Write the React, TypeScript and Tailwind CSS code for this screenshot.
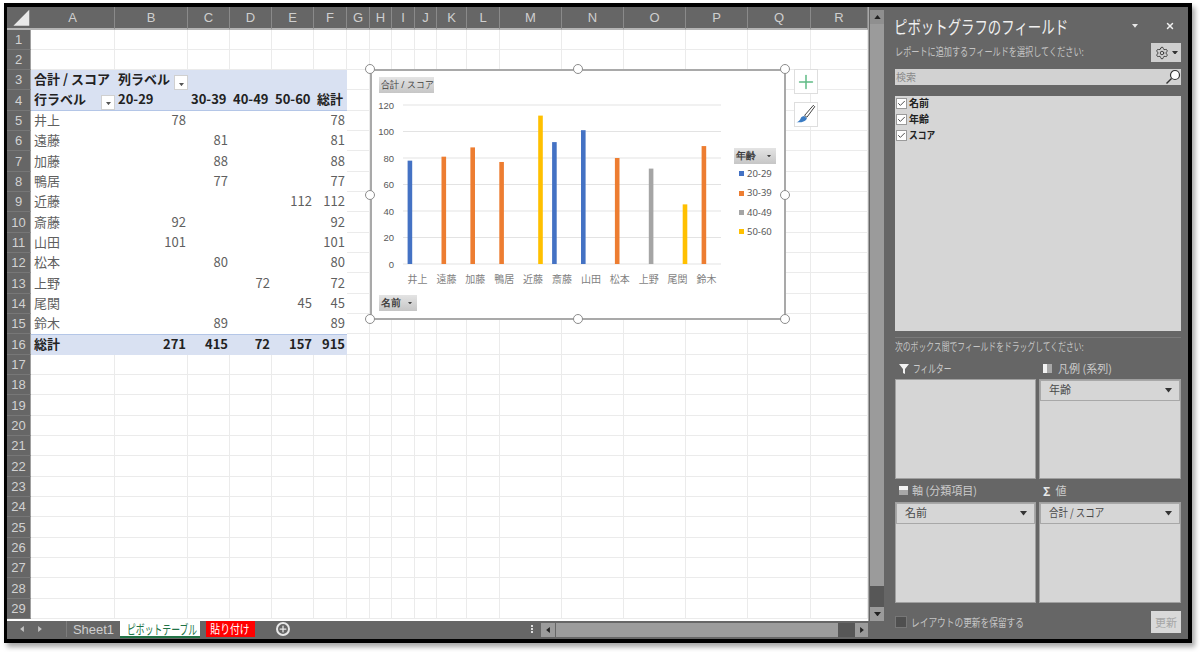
import React from 'react';
import { Settings, X, Plus, Check } from 'lucide-react';

const COLS = ['A', 'B', 'C', 'D', 'E', 'F', 'G', 'H', 'I', 'J', 'K', 'L', 'M', 'N', 'O', 'P', 'Q', 'R'];
const ROWS = Array.from({ length: 29 }, (_, i) => i + 1);

// name, column index of the age group, score
const PEOPLE: [string, number, number][] = [
  ['井上', 1, 78],
  ['遠藤', 2, 81],
  ['加藤', 2, 88],
  ['鴨居', 2, 77],
  ['近藤', 4, 112],
  ['斎藤', 1, 92],
  ['山田', 1, 101],
  ['松本', 2, 80],
  ['上野', 3, 72],
  ['尾関', 4, 45],
  ['鈴木', 2, 89],
];
const TOTALS = ['総計', '271', '415', '72', '157', '915'];
const HEAD = ['', '20-29', '30-39', '40-49', '50-60', '総計'];
const SERIES = [
  { label: '20-29', color: '#4472C4' },
  { label: '30-39', color: '#ED7D31' },
  { label: '40-49', color: '#A5A5A5' },
  { label: '50-60', color: '#FFC000' },
];

function Tri({ className = '', color = '#444', up = false }: { className?: string; color?: string; up?: boolean }) {
  return (
    <svg viewBox="0 0 8 5" className={className}>
      <polygon points={up ? '0,5 8,5 4,0' : '0,0 8,0 4,5'} fill={color} />
    </svg>
  );
}

function FilterBtn() {
  return (
    <span className="flex h-[15px] w-[14px] shrink-0 items-center justify-center self-end border border-[#d0d0d0] bg-white">
      <Tri className="mt-[3px] w-[5px]" color="#555" />
    </span>
  );
}

function Cell({ r, c }: { r: number; c: number }) {
  const inPivot = r >= 3 && r <= 16 && c <= 5;
  if (!inPivot) return <div className="border-r border-b border-[#ebebeb] bg-white" />;

  if (r === 3 || r === 4) {
    let content: React.ReactNode = null;
    if (r === 3 && c === 0) content = <span className="mb-[3px]">合計 / スコア</span>;
    if (r === 3 && c === 1)
      content = (
        <>
          <span className="mb-[3px]">列ラベル</span>
          <FilterBtn />
        </>
      );
    if (r === 4 && c === 0)
      content = (
        <>
          <span className="mb-[3px]">行ラベル</span>
          <FilterBtn />
        </>
      );
    if (r === 4 && c > 0) content = <span className="mb-[3px]">{HEAD[c]}</span>;
    return (
      <div className={`flex items-center justify-between overflow-visible whitespace-nowrap bg-[#d9e1f2] pl-[3px] text-[13px] leading-none font-bold text-[#222] ${r === 4 ? 'border-b border-[#b4c6e7]' : ''}`}>
        {content}
      </div>
    );
  }

  if (r === 16) {
    return (
      <div className={`flex items-center whitespace-nowrap border-t border-[#b4c6e7] bg-[#d9e1f2] pr-[2px] pb-[3px] pl-[3px] text-[13px] leading-none font-bold text-[#222] ${c === 0 ? 'justify-start' : 'justify-end'}`}>
        {TOTALS[c]}
      </div>
    );
  }

  const [name, col, score] = PEOPLE[r - 5];
  if (c === 0) return <div className="flex items-center bg-white pb-[3px] pl-[3px] text-[13px] leading-none text-[#5f5f5f]">{name}</div>;
  const show = c === col || c === 5;
  return <div className="flex items-center justify-end bg-white pr-[2px] pb-[3px] text-[13px] leading-none text-[#5f5f5f]">{show ? score : ''}</div>;
}

function Handle({ className }: { className: string }) {
  return <span className={`absolute h-[10px] w-[10px] rounded-full border-[1.5px] border-[#8c8c8c] bg-white ${className}`} />;
}

function ChartBtn({ className, children }: { className: string; children: React.ReactNode }) {
  return (
    <div className={`absolute flex h-[16px] items-center justify-between bg-linear-to-b from-[#e4e4e4] to-[#c6c6c6] px-[2px] text-[9.5px] leading-none whitespace-nowrap text-[#404040] ${className}`}>
      {children}
    </div>
  );
}

function PivotChart() {
  const x0 = 31;
  const catW = 28.9;
  const y0 = 193;
  const unit = 159 / 120;
  return (
    <div className="absolute top-[62px] left-[363px] h-[251px] w-[416px] border-2 border-[#a9a9a9] bg-white">
      <svg viewBox="0 0 412 247" className="absolute inset-0 h-[247px] w-[412px]">
        {[0, 20, 40, 60, 80, 100, 120].map((v) => (
          <g key={v}>
            <line x1={x0} x2={349} y1={y0 - v * unit} y2={y0 - v * unit} stroke="#e3e3e3" strokeWidth="1" />
            <text x={22} y={y0 - v * unit + 3.5} textAnchor="end" fontSize="9.5" fill="#595959" fontFamily="'Liberation Sans', sans-serif">
              {v}
            </text>
          </g>
        ))}
        {PEOPLE.map(([name, col, score], i) => (
          <g key={name}>
            <rect x={x0 + i * catW + 4.6 + (col - 1) * 5} y={y0 - score * unit} width={4.6} height={score * unit} fill={SERIES[col - 1].color} />
            <text x={x0 + i * catW + 14.5} y={211.5} textAnchor="middle" fontSize="10" fill="#7f7f7f" fontFamily="'Noto Sans CJK JP', sans-serif">
              {name}
            </text>
          </g>
        ))}
      </svg>

      <ChartBtn className="top-[6px] left-[7px] w-[55px]">
        <span className="inline-block origin-left scale-x-[0.9]">合計 / スコア</span>
      </ChartBtn>
      <ChartBtn className="top-[224px] left-[7px] w-[38px] font-bold">
        <span>名前</span>
        <Tri className="mr-[3px] w-[4px]" />
      </ChartBtn>
      <ChartBtn className="top-[77px] left-[362px] w-[42px] font-bold">
        <span>年齢</span>
        <Tri className="mr-[3px] w-[4px]" />
      </ChartBtn>

      <div className="absolute top-[93px] left-[367px] flex flex-col">
        {SERIES.map((s) => (
          <div key={s.label} className="flex h-[19.4px] items-center gap-[3px] text-[9.5px] leading-none text-[#595959]">
            <span className="h-[5px] w-[5px]" style={{ backgroundColor: s.color }} />
            <span>{s.label}</span>
          </div>
        ))}
      </div>

      <Handle className="top-[-7px] left-[-7px]" />
      <Handle className="top-[-7px] left-1/2 -translate-x-1/2" />
      <Handle className="top-[-7px] right-[-6px]" />
      <Handle className="top-1/2 left-[-7px] -translate-y-1/2" />
      <Handle className="top-1/2 right-[-6px] -translate-y-1/2" />
      <Handle className="bottom-[-6px] left-[-7px]" />
      <Handle className="bottom-[-6px] left-1/2 -translate-x-1/2" />
      <Handle className="right-[-6px] bottom-[-6px]" />
    </div>
  );
}

function SideButtons() {
  return (
    <>
      <div className="absolute top-[62px] left-[787px] flex h-[25px] w-[24px] items-center justify-center border border-[#dedede] bg-white">
        <Plus size={22} strokeWidth={1.5} color="#5fbb85" absoluteStrokeWidth />
      </div>
      <div className="absolute top-[95px] left-[787px] h-[25px] w-[24px] border border-[#dedede] bg-white">
        <svg viewBox="0 0 24 25" className="h-full w-full">
          <path d="M20 2.5 L21.5 4 L13 15.5 L10.5 13.5 Z" fill="#fff" stroke="#333" strokeWidth="1" />
          <path d="M10 14 L13 16.5 C12 19.5 8 21.5 1.5 21 C4 20 5.5 18.5 6 17 C6.5 15 8.5 14 10 14 Z" fill="#3b7cc4" />
        </svg>
      </div>
    </>
  );
}

function Sheet() {
  return (
    <div className="relative h-[614px] w-[861px] overflow-hidden bg-white">
      <div className="grid grid-cols-[24px_84px_73px_42px_42px_42px_33px_23px_22px_23px_22px_30px_33px_62px_62px_62px_62px_63px_57px] grid-rows-[22.5px_repeat(29,20.33px)] font-['Noto_Sans_CJK_JP','Liberation_Sans',sans-serif]">
        <div className="relative border-b-2 border-[#b5b5b5] bg-[#666]">
          <svg viewBox="0 0 24 22" className="absolute inset-0 h-full w-full">
            <polygon points="23,3 23,20 6,20" fill="#eaeaea" />
          </svg>
        </div>
        {COLS.map((c) => (
          <div key={c} className="flex items-center justify-center border-r border-b-2 border-r-[#8a8a8a] border-b-[#b5b5b5] bg-[#666] font-['Liberation_Sans',sans-serif] text-[13px] leading-none text-[#cfcfcf]">
            {c}
          </div>
        ))}
        {ROWS.map((r) => (
          <React.Fragment key={r}>
            <div className="flex items-center justify-center border-r border-b border-r-[#a0a0a0] border-b-[#777] bg-[#666] font-['Liberation_Sans',sans-serif] text-[13px] leading-none text-[#d2d2d2]">
              {r}
            </div>
            {COLS.map((_, c) => (
              <Cell key={c} r={r} c={c} />
            ))}
          </React.Fragment>
        ))}
      </div>
      <PivotChart />
      <SideButtons />
    </div>
  );
}

function VScroll() {
  return (
    <div className="flex h-[614px] w-[17px] flex-col border-l border-[#a8a8a8] bg-[#666] pt-[3px] pr-[1px] pl-[1px]">
      <div className="flex h-[14px] items-center justify-center bg-[#8f8f8f]">
        <Tri className="w-[7px]" color="#222" up />
      </div>
      <div className="h-[562px] bg-[#9b9b9b]" />
      <div className="h-[21px] bg-[#575757]" />
      <div className="flex h-[14px] items-center justify-center bg-[#9b9b9b]">
        <Tri className="w-[7px]" color="#222" />
      </div>
    </div>
  );
}

function TabBar() {
  return (
    <div className="flex h-[18px] w-[878px] items-start bg-[#666] font-['Noto_Sans_CJK_JP','Liberation_Sans',sans-serif] text-[#cfcfcf]">
      <div className="flex h-[16px] w-[60px] items-center gap-[12px] border-r border-[#7c7c7c] pl-[12px]">
        <Tri className="h-[6px] w-[6px] rotate-90" color="#c4c4c4" />
        <Tri className="h-[6px] w-[6px] -rotate-90" color="#c4c4c4" />
      </div>
      <div className="flex h-[16px] w-[53px] items-center justify-center font-['Liberation_Sans',sans-serif] text-[13px] leading-none">Sheet1</div>
      <div className="flex h-[17px] w-[80px] items-center border-b-2 border-[#217346] bg-white pl-[7px] text-[#217346]">
        <span className="inline-block w-[71px] origin-left scale-x-[0.68] text-[13px] leading-none whitespace-nowrap">ピボットテーブル</span>
      </div>
      <div className="ml-[6px] flex h-[16px] w-[49px] items-center justify-center bg-[#ff0000] text-white">
        <span className="inline-block shrink-0 scale-x-[0.82] text-[12px] leading-none whitespace-nowrap">貼り付け</span>
      </div>
      <div className="mt-[1px] ml-[21px] flex h-[14px] w-[14px] items-center justify-center rounded-full border-2 border-[#e8e8e8]">
        <Plus size={10} strokeWidth={3} color="#e8e8e8" />
      </div>
      <div className="ml-[241px] flex h-[16px] w-[2px] flex-col justify-center gap-[1px]">
        <span className="h-[2px] w-[2px] bg-[#e0e0e0]" />
        <span className="h-[2px] w-[2px] bg-[#e0e0e0]" />
        <span className="h-[2px] w-[2px] bg-[#e0e0e0]" />
      </div>
      <div className="mt-[2px] ml-[8px] flex h-[14px] w-[14px] items-center justify-center bg-[#9b9b9b]">
        <Tri className="h-[6px] w-[6px] rotate-90" color="#222" />
      </div>
      <div className="mt-[2px] ml-[1px] h-[14px] w-[282px] bg-[#9c9c9c]" />
      <div className="mt-[2px] h-[14px] w-[17px] bg-[#575757]" />
      <div className="mt-[2px] flex h-[14px] w-[13px] items-center justify-center bg-[#9b9b9b]">
        <Tri className="h-[6px] w-[6px] -rotate-90" color="#222" />
      </div>
    </div>
  );
}

function CheckRow({ label, squeeze }: { label: string; squeeze?: boolean }) {
  return (
    <div className="flex h-[16px] items-center pl-[1px]">
      <span className="flex h-[11px] w-[11px] items-center justify-center border border-[#9a9a9a] bg-white">
        <Check size={9} strokeWidth={2.5} color="#444" />
      </span>
      <span className={`ml-[2px] inline-block origin-left text-[10px] leading-none font-bold whitespace-nowrap text-[#222] ${squeeze ? 'scale-x-[0.87]' : ''}`}>{label}</span>
    </div>
  );
}

function FieldItem({ children }: { children: React.ReactNode }) {
  return (
    <div className="flex h-[21px] items-center justify-between border border-[#a8a8a8] bg-[#d6d6d6] pr-[7px] pb-[2px] pl-[8px] text-[11px] leading-none whitespace-nowrap text-[#4a4a4a]">
      {children}
      <Tri className="mt-[2px] w-[7px]" color="#333" />
    </div>
  );
}

function AreaLabel({ icon, children }: { icon: React.ReactNode; children: React.ReactNode }) {
  return (
    <div className="flex h-[18px] items-center gap-[4px] pb-[3px] pl-[4px] text-[11px] leading-none whitespace-nowrap text-[#cccccc]">
      {icon}
      {children}
    </div>
  );
}

function Panel() {
  return (
    <div className="flex h-[632px] w-[303px] flex-col bg-[#666] pr-[7px] pl-[10px] font-['Noto_Sans_CJK_JP','Liberation_Sans',sans-serif]">
      <div className="flex h-[36px] items-center pt-[2px]">
        <span className="-ml-[1px] inline-block w-[238px] origin-left scale-x-[0.745] text-[18px] leading-none whitespace-nowrap text-[#f0f0f0]">ピボットグラフのフィールド</span>
        <Tri className="w-[6px]" color="#e8e8e8" />
        <X size={10} strokeWidth={3.5} color="#f0f0f0" className="ml-[27px]" />
      </div>
      <div className="flex h-[19px] items-center justify-between">
        <span className="mb-[2px] inline-block w-[192px] origin-left scale-x-[0.74] text-[11px] leading-none whitespace-nowrap text-[#c4c4c4]">レポートに追加するフィールドを選択してください:</span>
        <div className="flex h-[19px] w-[30px] items-center justify-center gap-[3px] bg-[#cfcfcf]">
          <Settings size={14} strokeWidth={1.5} color="#333" />
          <Tri className="w-[6px]" color="#333" />
        </div>
      </div>
      <div className="mt-[7px] flex h-[16px] items-center justify-between bg-[#d2d2d2] pl-[1px]">
        <span className="text-[10px] leading-none text-[#8a8a8a]">検索</span>
        <svg viewBox="0 0 16 16" className="h-[16px] w-[16px]">
          <circle cx="10" cy="6" r="4.5" fill="#fff" stroke="#333" strokeWidth="1.2" />
          <line x1="6.5" y1="9.5" x2="1.5" y2="14.5" stroke="#333" strokeWidth="1.5" />
        </svg>
      </div>
      <div className="mt-[11px] flex h-[235px] flex-col bg-[#d6d6d6]">
        <div className="-mt-[1px] flex flex-col">
          <CheckRow label="名前" />
          <CheckRow label="年齢" />
          <CheckRow label="スコア" squeeze />
        </div>
      </div>
      <div className="mt-[6px] flex h-[19px] items-center border-t border-[#7a7a7a] pb-[2px]">
        <span className="inline-block w-[190px] origin-left scale-x-[0.71] text-[11px] leading-none whitespace-nowrap text-[#c4c4c4]">次のボックス間でフィールドをドラッグしてください:</span>
      </div>
      <div className="mt-[5px] grid grid-cols-[141px_142px] grid-rows-[18px_100px_23px_101px] gap-x-[3px]">
        <AreaLabel
          icon={
            <svg viewBox="0 0 10 10" className="h-[10px] w-[10px]">
              <polygon points="0,0 10,0 6,5 6,10 4,9 4,5" fill="#f2f2f2" />
            </svg>
          }
        >
          <span className="inline-block origin-left scale-x-[0.7]">フィルター</span>
        </AreaLabel>
        <AreaLabel
          icon={
            <svg viewBox="0 0 9 9" className="h-[9px] w-[9px]">
              <rect width="4" height="9" fill="#f2f2f2" />
              <rect x="4" width="5" height="9" fill="#a8a8a8" />
            </svg>
          }
        >
          <span className="ml-[2px]">凡例 (系列)</span>
        </AreaLabel>
        <div className="border border-[#a0a0a0] bg-[#d6d6d6]" />
        <div className="border border-[#a0a0a0] bg-[#d6d6d6]">
          <FieldItem>年齢</FieldItem>
        </div>
        <div className="flex items-end pb-[1px]">
          <AreaLabel
            icon={
              <svg viewBox="0 0 9 9" className="h-[9px] w-[9px]">
                <rect width="9" height="4" fill="#f2f2f2" />
                <rect y="4" width="9" height="5" fill="#a8a8a8" />
              </svg>
            }
          >
            <span>軸 (分類項目)</span>
          </AreaLabel>
        </div>
        <div className="flex items-end pb-[1px]">
          <AreaLabel icon={<span className="text-[12px] font-bold text-[#e8e8e8]">Σ</span>}>
            <span className="ml-[1px]">値</span>
          </AreaLabel>
        </div>
        <div className="border border-[#a0a0a0] bg-[#d6d6d6]">
          <FieldItem>名前</FieldItem>
        </div>
        <div className="border border-[#a0a0a0] bg-[#d6d6d6]">
          <FieldItem>
            <span className="inline-block origin-left scale-x-[0.86]">合計 / スコア</span>
          </FieldItem>
        </div>
      </div>
      <div className="mt-[8px] flex h-[22px] items-center justify-between">
        <div className="flex items-center">
          <span className="h-[12px] w-[12px] border border-[#777] bg-[#4f4f4f]" />
          <span className="ml-[4px] inline-block w-[113px] origin-left scale-x-[0.79] text-[11px] leading-none whitespace-nowrap text-[#c4c4c4]">レイアウトの更新を保留する</span>
        </div>
        <div className="flex h-[22px] w-[30px] items-center justify-center bg-[#d9d9d9] text-[11px] leading-none text-[#a6a6a6]">更新</div>
      </div>
    </div>
  );
}

export default function App() {
  return (
    <div className="h-[652px] w-[1200px] overflow-hidden bg-white pt-[3px] pl-[4px]">
      <div className="flex h-[640px] w-[1188px] border-t-4 border-r-4 border-b-4 border-l-[3px] border-black shadow-[3px_4px_5px_rgba(0,0,0,0.35)]">
        <div className="flex w-[878px] flex-col">
          <div className="flex">
            <Sheet />
            <VScroll />
          </div>
          <TabBar />
        </div>
        <Panel />
      </div>
    </div>
  );
}
